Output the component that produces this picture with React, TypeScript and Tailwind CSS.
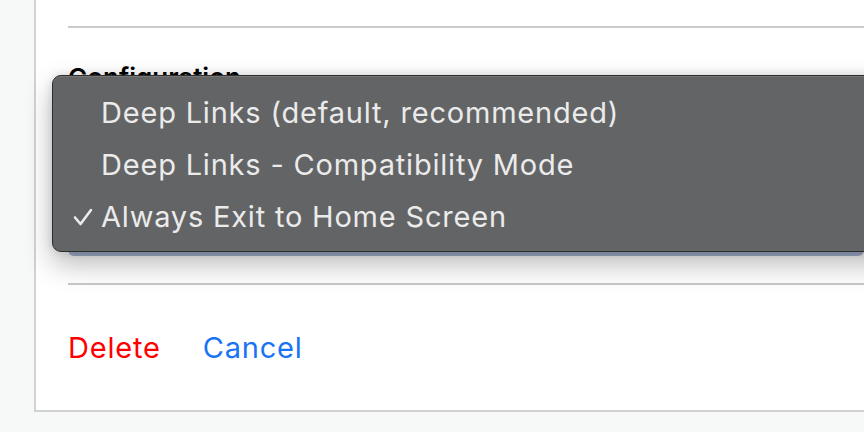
import React from "react";

export default function App() {
  const font = { fontFamily: "Inter, 'Liberation Sans', sans-serif" };
  return (
    <div className="relative h-[432px] w-[864px] overflow-hidden bg-[#f7f8f8]" style={font}>
      <div className="ml-[34px] h-[412px] border-l-2 border-b-2 border-[#d2d2d2] bg-white pl-[32px]">
        <div className="h-[26px]" />
        <div className="h-[2px] bg-[#cacaca]" />
        <div className="mt-[34px] text-[26px] font-semibold leading-[32px] text-black">Configuration</div>
        <div className="mt-[102px] h-[60px] rounded-md bg-[#a6b5d4]" />
        <div className="mt-[27px] h-[2px] bg-[#c8c8c8]" />
        <div className="mt-[45px] flex gap-[42px] text-[29px] leading-[36px] tracking-[0.8px]">
          <span className="text-[#ff0000]">Delete</span>
          <span className="text-[#1a73f5]">Cancel</span>
        </div>
      </div>

      <div className="absolute left-[52px] top-[75px] h-[177px] w-[850px] rounded-[9px] border border-[#2e2e2e] bg-[#636465] pt-[11px] shadow-[0_12px_28px_rgba(0,0,0,0.28),0_0_10px_rgba(0,0,0,0.12),inset_0_1px_0_rgba(255,255,255,0.12)]">
        {[
          { t: "Deep Links (default, recommended)", c: false },
          { t: "Deep Links - Compatibility Mode", c: false },
          { t: "Always Exit to Home Screen", c: true },
        ].map((it) => (
          <div key={it.t} className="flex h-[52px] items-center text-[29px] tracking-[0.8px] text-[#ebebeb]">
            <span className="flex w-[48px] justify-start pl-[20px]">
              {it.c ? (
                <svg width="20" height="18" viewBox="0 0 20 18" fill="none">
                  <path d="M2 9.5 L7.5 16 L18 2" stroke="#ebebeb" strokeWidth="2.6" strokeLinecap="round" strokeLinejoin="round" />
                </svg>
              ) : null}
            </span>
            <span>{it.t}</span>
          </div>
        ))}
      </div>
    </div>
  );
}
